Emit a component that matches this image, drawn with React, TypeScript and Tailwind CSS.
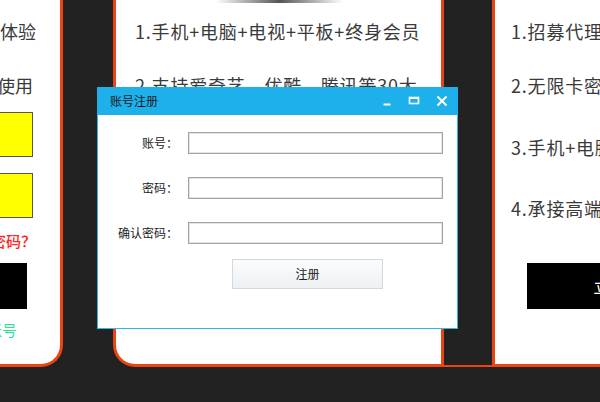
import React from "react";

const orange = "border-[#ec4312]";

function LeftCard() {
	return (
		<div
			className={`ml-[-140px] flex h-[367px] w-[203px] shrink-0 flex-col items-end rounded-br-[22px] border-r-[3px] border-b-[3px] ${orange} bg-white`}
		>
			<div className="mt-[19px] mr-[24px] whitespace-nowrap text-[18px] leading-[24px] text-[#3a3a3a]">
				免费注册体验
			</div>
			<div className="mt-[30px] mr-[27px] whitespace-nowrap text-[18px] leading-[24px] text-[#3a3a3a]">
				注册后即可使用
			</div>
			<div className="mt-[15px] mr-[27px] h-[45px] w-[120px] border border-[#555] bg-[#ffff00]" />
			<div className="mt-[16px] mr-[27px] h-[45px] w-[120px] border border-[#555] bg-[#ffff00]" />
			<div className="mt-[13px] mr-[24px] whitespace-nowrap text-[15px] font-medium leading-[20px] text-[#ff2424]">
				忘记密码？
			</div>
			<div className="mt-[12px] mr-[33px] h-[46px] w-[120px] bg-black" />
			<div className="mt-[11px] mr-[43px] whitespace-nowrap text-[15px] leading-[20px] text-[#2de38f]">
				注册账号
			</div>
		</div>
	);
}

function MiddleCard() {
	return (
		<div
			className={`ml-[50px] flex h-[367px] w-[331px] shrink-0 flex-col rounded-bl-[22px] border-x-[3px] border-b-[3px] ${orange} bg-white pl-[19px]`}
		>
			<div className="ml-[81px] h-[3px] w-[127px] bg-[linear-gradient(90deg,#ffffff,#555_50%,#ffffff)]" />
			<div className="mt-[16px] whitespace-nowrap text-[18px] leading-[24px] tracking-[0.8px] text-[#3a3a3a]">
				1.手机+电脑+电视+平板+终身会员
			</div>
			<div className="mt-[30px] whitespace-nowrap text-[18px] leading-[24px] tracking-[0.8px] text-[#3a3a3a]">
				2.支持爱奇艺、优酷、腾讯等30大
			</div>
		</div>
	);
}

function RightCard() {
	return (
		<div
			className={`flex h-[367px] w-[200px] shrink-0 flex-col border-l-[3px] border-b-[3px] ${orange} bg-white pl-[16px] tracking-[0.8px]`}
		>
			<div className="mt-[19px] whitespace-nowrap text-[18px] leading-[24px] text-[#3a3a3a]">
				1.招募代理商
			</div>
			<div className="mt-[30px] whitespace-nowrap text-[18px] leading-[24px] text-[#3a3a3a]">
				2.无限卡密
			</div>
			<div className="mt-[38px] whitespace-nowrap text-[18px] leading-[24px] text-[#3a3a3a]">
				3.手机+电脑
			</div>
			<div className="mt-[37px] whitespace-nowrap text-[18px] leading-[24px] text-[#3a3a3a]">
				4.承接高端
			</div>
			<div className="mt-[43px] ml-[16px] flex h-[46px] w-[200px] shrink-0 items-center justify-center bg-black text-[16px] text-white">
				立即购买
			</div>
		</div>
	);
}

function Field({ label }: { label: string }) {
	return (
		<div className="flex items-center">
			<div className="w-[80px] text-right text-[12px] text-[#222]">{label}：</div>
			<div className="ml-[10px] h-[22px] w-[255px] border border-[#a3a3a3] bg-white shadow-[inset_0_0_0_1px_#e4e4e4]" />
		</div>
	);
}

function RegisterDialog() {
	return (
		<div className="absolute top-[87px] left-[97px] flex h-[242px] w-[361px] flex-col">
			<div className="flex h-[28px] items-center bg-[#1eb0eb] pl-[13px] pr-[10px]">
				<span className="text-[12px] text-[#1b1b1b]">账号注册</span>
				<div className="ml-auto flex items-center">
					<svg width="12" height="12" viewBox="0 0 12 12" className="mr-[15px]">
						<rect x="2.5" y="8.5" width="7" height="2" fill="#fff" />
					</svg>
					<svg width="12" height="12" viewBox="0 0 12 12" className="mr-[16px]">
						<rect x="1.5" y="2.5" width="9" height="6" fill="none" stroke="#fff" strokeWidth="1.6" />
						<rect x="1.5" y="2" width="9" height="2" fill="#fff" />
					</svg>
					<svg width="12" height="12" viewBox="0 0 12 12">
						<path d="M1.5 1.5 L10.5 10.5 M10.5 1.5 L1.5 10.5" stroke="#fff" strokeWidth="2" />
					</svg>
				</div>
			</div>
			<div className="flex flex-1 flex-col border-x border-b border-[#34b7ec] bg-white pt-[17px]">
				<div className="flex flex-col gap-[23px]">
					<Field label="账号" />
					<Field label="密码" />
					<Field label="确认密码" />
				</div>
				<button className="mt-[15px] ml-[134px] flex h-[30px] w-[151px] items-center justify-center border border-[#d3d9df] bg-[linear-gradient(#fbfcfd,#edf1f4)] text-[12px] text-[#222]">
					注册
				</button>
			</div>
		</div>
	);
}

export default function App() {
	return (
		<div className="relative h-[402px] w-[600px] overflow-hidden bg-[#222222] font-['Noto_Sans_CJK_SC','Noto_Sans',sans-serif]">
			<div className="flex items-start">
				<LeftCard />
				<MiddleCard />
				<div className="flex h-[367px] w-[48px] shrink-0 items-end">
					<div className="h-[2px] w-full bg-[#ec4312]" />
				</div>
				<RightCard />
			</div>
			<RegisterDialog />
		</div>
	);
}
